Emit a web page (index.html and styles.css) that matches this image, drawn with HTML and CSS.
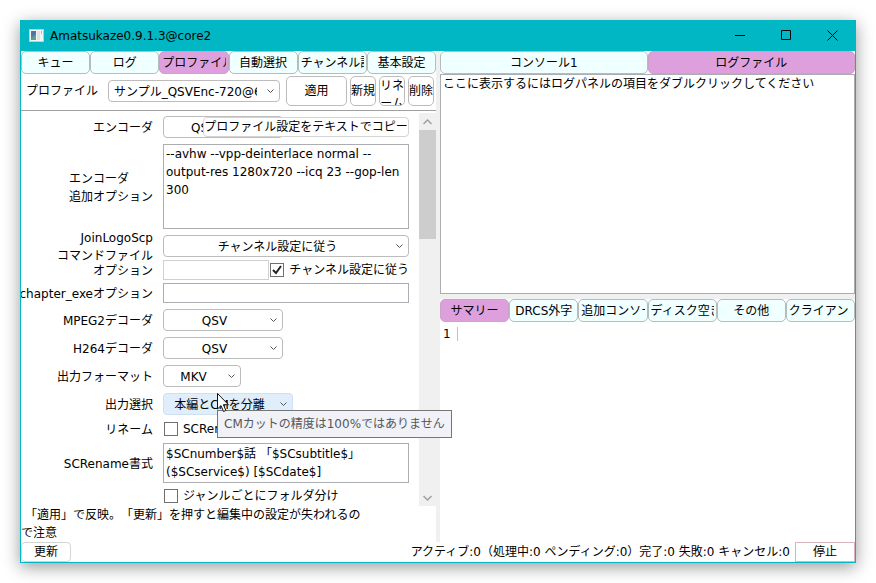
FILE: index.html
```
<!DOCTYPE html>
<html lang="ja">
  <head>
    <meta charset="utf-8">
    <link rel="stylesheet" href="styles.css">
    <title>Amatsukaze0.9.1.3@core2</title>
  </head>
  <body>
    <div class="window">
      <header class="titlebar">
        <svg class="app-icon" width="15" height="13" viewBox="0 0 15 13">
          <rect x="0.5" y="0.5" width="14" height="12" fill="#f4f4f4" stroke="#c4cccd"/>
          <rect x="2" y="2" width="5" height="9" fill="#5b8f96"/>
          <path d="M2 2h5v3L2 8z" fill="#4f75a8"/>
          <path d="M2 11l5-5v5z" fill="#5fa37a"/>
          <rect x="8" y="2" width="3" height="9" fill="#dfe3e4"/>
          <rect x="12" y="2" width="1" height="3" fill="#9fc79f"/>
        </svg>
        <h1>Amatsukaze0.9.1.3@core2</h1>
        <button class="caption" aria-label="最小化"><svg width="11" height="11"><path d="M0 5.5h10"/></svg></button>
        <button class="caption" aria-label="最大化"><svg width="11" height="11"><path d="M0.5 0.5h9v9h-9z"/></svg></button>
        <button class="caption" aria-label="閉じる"><svg width="11" height="11"><path d="M0.5 0.5l10 10M10.5 0.5l-10 10"/></svg></button>
      </header>

      <main class="panes">
        <section class="left">
          <nav class="tabs">
            <button><span>キュー</span></button>
            <button><span>ログ</span></button>
            <button class="active"><span>プロファイル</span></button>
            <button><span>自動選択</span></button>
            <button><span>チャンネル設定</span></button>
            <button><span>基本設定</span></button>
          </nav>

          <div class="toolbar">
            <label for="profile">プロファイル</label>
            <select id="profile" class="profile"><option>サンプル_QSVEnc-720@60</option></select>
            <button class="apply">適用</button>
            <button class="small">新規</button>
            <button class="small rename">リネーム</button>
            <button class="small">削除</button>
          </div>

          <div class="scroll">
            <form class="settings">
              <div class="row">
                <label for="encoder">エンコーダ</label>
                <div class="field">
                  <select id="encoder" class="medium"><option>QSVEnc</option></select>
                  <button type="button" class="copy">プロファイル設定をテキストでコピー</button>
                </div>
              </div>
              <div class="row tight">
                <label for="encopt"><span class="lines">エンコーダ<br>追加オプション</span></label>
                <div class="field">
                  <textarea id="encopt" class="options">--avhw --vpp-deinterlace normal --output-res 1280x720 --icq 23 --gop-len 300</textarea>
                </div>
              </div>
              <div class="row script">
                <label for="jls">JoinLogoScp<br>コマンドファイル</label>
                <div class="field">
                  <select id="jls" class="wide"><option>チャンネル設定に従う</option></select>
                </div>
              </div>
              <div class="row tight">
                <label for="jlsopt">オプション</label>
                <div class="field">
                  <input id="jlsopt" type="text" disabled>
                  <input id="follow" type="checkbox" checked>
                  <label for="follow">チャンネル設定に従う</label>
                </div>
              </div>
              <div class="row">
                <label for="chapter">chapter_exeオプション</label>
                <div class="field"><input id="chapter" type="text"></div>
              </div>
              <div class="row">
                <label for="mpeg2">MPEG2デコーダ</label>
                <div class="field"><select id="mpeg2" class="medium"><option>QSV</option></select></div>
              </div>
              <div class="row">
                <label for="h264">H264デコーダ</label>
                <div class="field"><select id="h264" class="medium"><option>QSV</option></select></div>
              </div>
              <div class="row">
                <label for="format">出力フォーマット</label>
                <div class="field"><select id="format" class="narrow"><option>MKV</option></select></div>
              </div>
              <div class="row tight">
                <label for="output">出力選択</label>
                <div class="field"><select id="output" class="output hover"><option>本編とCMを分離</option></select></div>
              </div>
              <div class="row check tight">
                <span class="name">リネーム</span>
                <div class="field">
                  <input id="rename" type="checkbox">
                  <label for="rename">SCRename</label>
                </div>
              </div>
              <div class="row tight">
                <label for="scformat">SCRename書式</label>
                <div class="field">
                  <textarea id="scformat" class="scformat">$SCnumber$話 「$SCsubtitle$」 ($SCservice$) [$SCdate$]</textarea>
                </div>
              </div>
              <div class="row genre">
                <span class="name"></span>
                <div class="field">
                  <input id="genre" type="checkbox">
                  <label for="genre">ジャンルごとにフォルダ分け</label>
                </div>
              </div>
            </form>
            <div class="scrollbar">
              <button aria-label="上へ"><svg width="9" height="6"><path d="M0.5 5l4-4 4 4"/></svg></button>
              <div class="thumb"></div>
              <button aria-label="下へ"><svg width="9" height="6"><path d="M0.5 1l4 4 4-4"/></svg></button>
            </div>
          </div>

          <p class="note">「適用」で反映。「更新」を押すと編集中の設定が失われるの<br>で注意</p>
        </section>

        <div class="splitter"></div>

        <section class="right">
          <nav class="tabs">
            <button><span>コンソール1</span></button>
            <button class="active"><span>ログファイル</span></button>
          </nav>
          <div class="log">ここに表示するにはログパネルの項目をダブルクリックしてください</div>
          <div class="hsplitter"></div>
          <nav class="tabs">
            <button class="active"><span>サマリー</span></button>
            <button><span>DRCS外字</span></button>
            <button><span>追加コンソール</span></button>
            <button><span>ディスク空き</span></button>
            <button><span>その他</span></button>
            <button><span>クライアント</span></button>
          </nav>
          <div class="summary"><span class="line">1</span></div>
        </section>
      </main>

      <footer class="status">
        <button class="update">更新</button>
        <span>アクティブ:0（処理中:0 ペンディング:0）完了:0 失敗:0 キャンセル:0</span>
        <button class="stop">停止</button>
      </footer>

      <div class="tooltip">CMカットの精度は100%ではありません</div>
      <svg class="cursor" width="13" height="20" viewBox="0 0 13 20">
        <path d="M0.5 0.5v15.5l3.5-3.4 2.5 5.9 2.4-1-2.5-5.8h5z" fill="#fff" stroke="#111"/>
      </svg>
    </div>
  </body>
</html>
```

FILE: styles.css
```
* {
  box-sizing: border-box;
}

body {
  margin: 0;
  height: 100vh;
  padding: 20px;
  display: flex;
  background-color: white;
  overflow: hidden;
}

body, button, select, input, textarea {
  font-family: "DejaVu Sans", "Noto Sans CJK JP", sans-serif;
  font-size: 12px;
  line-height: 18px;
  text-spacing-trim: space-all;
  color: black;
}

button, select, input, textarea {
  margin: 0;
  padding: 0;
  border: solid 1px #bcbcbc;
  background-color: white;
}

.window {
  position: relative;
  flex: 1;
  min-width: 0;
  display: flex;
  flex-direction: column;
  border: solid 1px #00b7c3;
  border-top: 0;
  background-color: white;
  box-shadow: 0 4px 16px rgba(0, 0, 0, 0.4);
}

/* title bar */
.titlebar {
  flex: none;
  height: 31px;
  display: flex;
  align-items: center;
  background-color: #00b7c3;
}

.app-icon {
  margin: 0 6px 0 8px;
}

.titlebar h1 {
  flex: 1;
  margin: 0;
  font-size: 12px;
  font-weight: normal;
}

.caption {
  width: 46px;
  height: 31px;
  border: 0;
  background: none;
  display: flex;
  justify-content: center;
  align-items: center;
}

.caption svg, .scrollbar svg {
  fill: none;
  stroke: black;
}

/* panes */
.panes {
  flex: 1;
  min-height: 0;
  display: flex;
}

.left, .right {
  flex: 1;
  min-width: 0;
  display: flex;
  flex-direction: column;
}

.splitter {
  width: 4px;
  background-color: #f0f0f0;
}

.hsplitter {
  flex: none;
  height: 5px;
  background-color: #f0f0f0;
}

.tabs {
  flex: none;
  height: 23px;
  display: flex;
}

.tabs button {
  flex: 1 1 0;
  min-width: 0;
  padding: 0 2px;
  border: solid 1px #b4bcbc;
  border-radius: 5px;
  background-color: azure;
}

.tabs button.active {
  border-color: #c8a4c8;
  background-color: plum;
}

.tabs span {
  display: block;
  overflow: hidden;
  white-space: nowrap;
}

/* profile toolbar */
.toolbar {
  flex: none;
  height: 37px;
  padding: 2px 2px 4px 5px;
  display: flex;
  align-items: center;
  gap: 3px;
  border-bottom: solid 1px #a0a0a0;
}

.toolbar label {
  white-space: nowrap;
}

.toolbar button {
  height: 30px;
  border-radius: 5px;
  overflow: hidden;
}

.toolbar .apply {
  width: 61px;
  margin-left: 3px;
}

.toolbar .small {
  width: 26px;
  padding-top: 5px;
  display: flex;
  justify-content: center;
  word-break: break-all;
}

.toolbar .rename {
  padding-top: 0;
}

select {
  appearance: none;
  height: 22px;
  padding: 2px 22px 0 5px;
  border-radius: 4px;
  text-align: center;
  text-align-last: center;
  background: white url("data:image/svg+xml,%3Csvg xmlns='http://www.w3.org/2000/svg' width='7' height='5'%3E%3Cpath d='M.5 .5l3 3 3-3' fill='none' stroke='%23555'/%3E%3C/svg%3E") no-repeat right 5px center;
}

.profile {
  flex: 1;
  min-width: 0;
  margin-left: 7px;
  text-align: left;
  text-align-last: left;
}

/* settings */
.scroll {
  flex: 1;
  min-height: 0;
  display: flex;
}

.settings {
  flex: 1;
  min-width: 0;
  padding: 5px 10px 0 0;
  overflow: hidden;
}

.row {
  display: flex;
  align-items: center;
  margin-bottom: 6px;
}

.row.tight {
  margin-bottom: 3px;
}

.row.script {
  height: 28px;
  margin-bottom: 0;
}

.row.check {
  height: 22px;
}

.row.genre {
  height: 20px;
}

.row > label, .row > .name {
  flex: none;
  width: 132px;
  margin-right: 10px;
  padding-top: 2px;
  display: flex;
  justify-content: flex-end;
  text-align: right;
  white-space: nowrap;
}

.row > label .lines {
  text-align: left;
}

.row.script > label {
  display: block;
}

.field {
  flex: 1;
  min-width: 0;
  display: flex;
  align-items: center;
}

.field label {
  margin-left: 5px;
  white-space: nowrap;
}

.medium {
  width: 120px;
}

.narrow {
  width: 78px;
}

.output {
  width: 130px;
}

.wide {
  width: 100%;
}

select.hover {
  border-color: #cfe0f2;
  background-color: #e0edfb;
}

.copy {
  position: relative;
  flex: 1;
  height: 20px;
  margin-left: -80px;
  border-color: #d4d4d4;
  border-radius: 4px;
  white-space: nowrap;
}

input[type="text"], textarea {
  flex: 1;
  min-width: 0;
  height: 20px;
  border: solid 1px #abadb3;
}

input[type="text"]:disabled {
  border-color: #d0d0d0;
}

textarea {
  padding: 0 2px;
  resize: none;
  overflow: hidden;
}

.options {
  height: 85px;
}

.scformat {
  height: 40px;
  padding-top: 1px;
}

input[type="checkbox"] {
  appearance: none;
  flex: none;
  width: 14px;
  height: 14px;
  margin-left: 1px;
  border: solid 1px #707070;
}

input[type="checkbox"]:checked {
  background: white url("data:image/svg+xml,%3Csvg xmlns='http://www.w3.org/2000/svg' width='12' height='12'%3E%3Cpath d='M2 6l3 3 5-7' fill='none' stroke='%23222' stroke-width='2'/%3E%3C/svg%3E") no-repeat center;
}

.scrollbar {
  width: 17px;
  margin-top: 2px;
  display: flex;
  flex-direction: column;
  background-color: #f0f0f0;
}

.scrollbar button {
  height: 17px;
  border: 0;
  background: none;
  display: flex;
  justify-content: center;
  align-items: center;
}

.scrollbar button:last-child {
  margin-top: auto;
}

.scrollbar svg {
  stroke: #a0a0a0;
  stroke-width: 1.5;
}

.thumb {
  height: 109px;
  background-color: #cdcdcd;
}

.note {
  flex: none;
  margin: 0;
  text-indent: 4px;
  white-space: nowrap;
}

.note::first-line {
  color: black;
}

/* right side */
.log {
  flex: 1;
  padding: 0 2px 4px;
  border: solid 1px #abadb3;
}

.summary {
  flex: 1;
  padding: 3px;
}

.line {
  display: inline-block;
  padding-right: 6px;
  border-right: solid 1px #c0c0c0;
  line-height: 14px;
}

/* status bar */
.status {
  flex: none;
  height: 20px;
  display: flex;
  align-items: center;
}

.status span {
  flex: 1;
  margin-right: 5px;
  text-align: right;
  white-space: nowrap;
}

.status button {
  height: 20px;
}

.update {
  width: 50px;
  border-color: #d4d4d4;
  border-radius: 4px;
}

.stop {
  width: 60px;
  border-color: #dcb4bc;
}

/* floating over the form */
.tooltip {
  position: absolute;
  left: 196px;
  top: 390px;
  padding: 4px 6px;
  border: solid 1px #767676;
  background-color: #f1f2f7;
  color: #575757;
  white-space: nowrap;
}

.cursor {
  position: absolute;
  left: 196px;
  top: 373px;
}
```
